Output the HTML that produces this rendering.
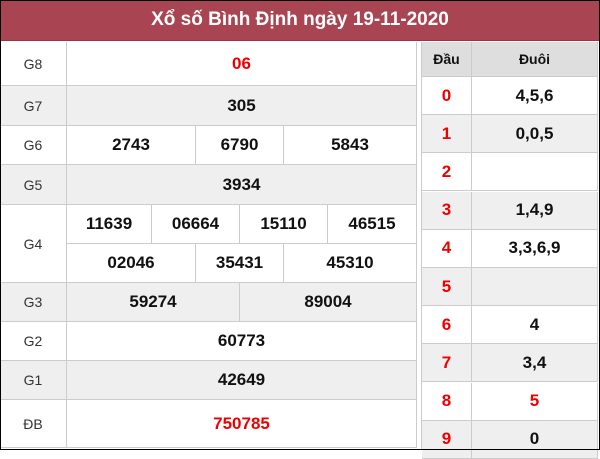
<!DOCTYPE html>
<html><head><meta charset="utf-8"><style>
*{margin:0;padding:0;box-sizing:border-box}
body{width:600px;height:450px;position:relative;overflow:hidden;background:#fff;font-family:"Liberation Sans",Arial,sans-serif}
.frame{position:absolute;left:0;top:0;width:600px;height:450px;border:1px solid #000;z-index:10;pointer-events:none}
.hd{position:absolute;left:0;top:0;width:600px;height:41px;background:#a94552;border-bottom:1px solid #9a3444;color:#fff;font-weight:bold;font-size:19px;text-align:center;line-height:40px}
.c{position:absolute;display:flex;align-items:center;justify-content:center;border-right:1px solid #ccc;border-bottom:1px solid #ccc;font-weight:bold;font-size:17px;color:#111}
.l{font-weight:normal;font-size:14px;color:#333}
.g{background:#efefef}
.r{color:#e00}
</style></head><body>
<div class="hd">Xổ số Bình Định ngày 19-11-2020</div>
<div id="L"></div>
<div id="R"></div>
<div class="frame"></div>
<script>
var H='';
function c(x,y,w,h,t,cls){H+='<div class="c '+(cls||'')+'" style="left:'+x+'px;top:'+y+'px;width:'+(w)+'px;height:'+(h)+'px">'+t+'</div>';}
// left table rows
var rows=[[42,86,'G8',[['06','r']],''],[86,126,'G7',[['305']],'g'],[126,165,'G6',[['2743'],['6790'],['5843']],''],[165,205,'G5',[['3934']],'g'],[283,322,'G3',[['59274'],['89004']],'g'],[322,361,'G2',[['60773']],''],[361,400,'G1',[['42649']],'g'],[400,448,'ĐB',[['750785','r']],'']];
var splits={1:[67,417],2:[67,240,417],3:[67,196,284,417]};
rows.forEach(function(r){c(0,r[0],67,r[1]-r[0],r[2],'l '+r[4]);var s=splits[r[3].length];for(var i=0;i<r[3].length;i++)c(s[i],r[0],s[i+1]-s[i],r[1]-r[0],r[3][i][0],r[4]+' '+(r[3][i][1]||''));});
c(0,205,67,78,'G4','l');
var a=[67,152,240,328,417],v=['11639','06664','15110','46515'];
for(var i=0;i<4;i++)c(a[i],205,a[i+1]-a[i],39,v[i]);
var b=[67,196,284,417],w=['02046','35431','45310'];
for(var i=0;i<3;i++)c(b[i],244,b[i+1]-b[i],39,w[i]);
// right
H+='<div style="position:absolute;left:421px;top:42px;width:1px;height:408px;background:#ccc"></div>';
c(422,42,50,35,'Đầu','g');c(472,42,126,35,'Đuôi','g');
H+='<style>.hh{}</style>';
var d=['4,5,6','0,0,5','','1,4,9','3,3,6,9','','4','3,4','5','0'];
for(var i=0;i<10;i++){var y=77+i*38.2;var g=i%2?'g':'';c(422,y,50,38,i,'r '+g);c(472,y,126,38,d[i],g+(i==8?' r':''));}
document.getElementById('L').innerHTML=H;
</script>
<style>
#L .c[style*="top:42px"][style*="left:422px"],#L .c[style*="top:42px"][style*="left:472px"]{background:#dedede;font-size:14px}
</style>
</body></html>
